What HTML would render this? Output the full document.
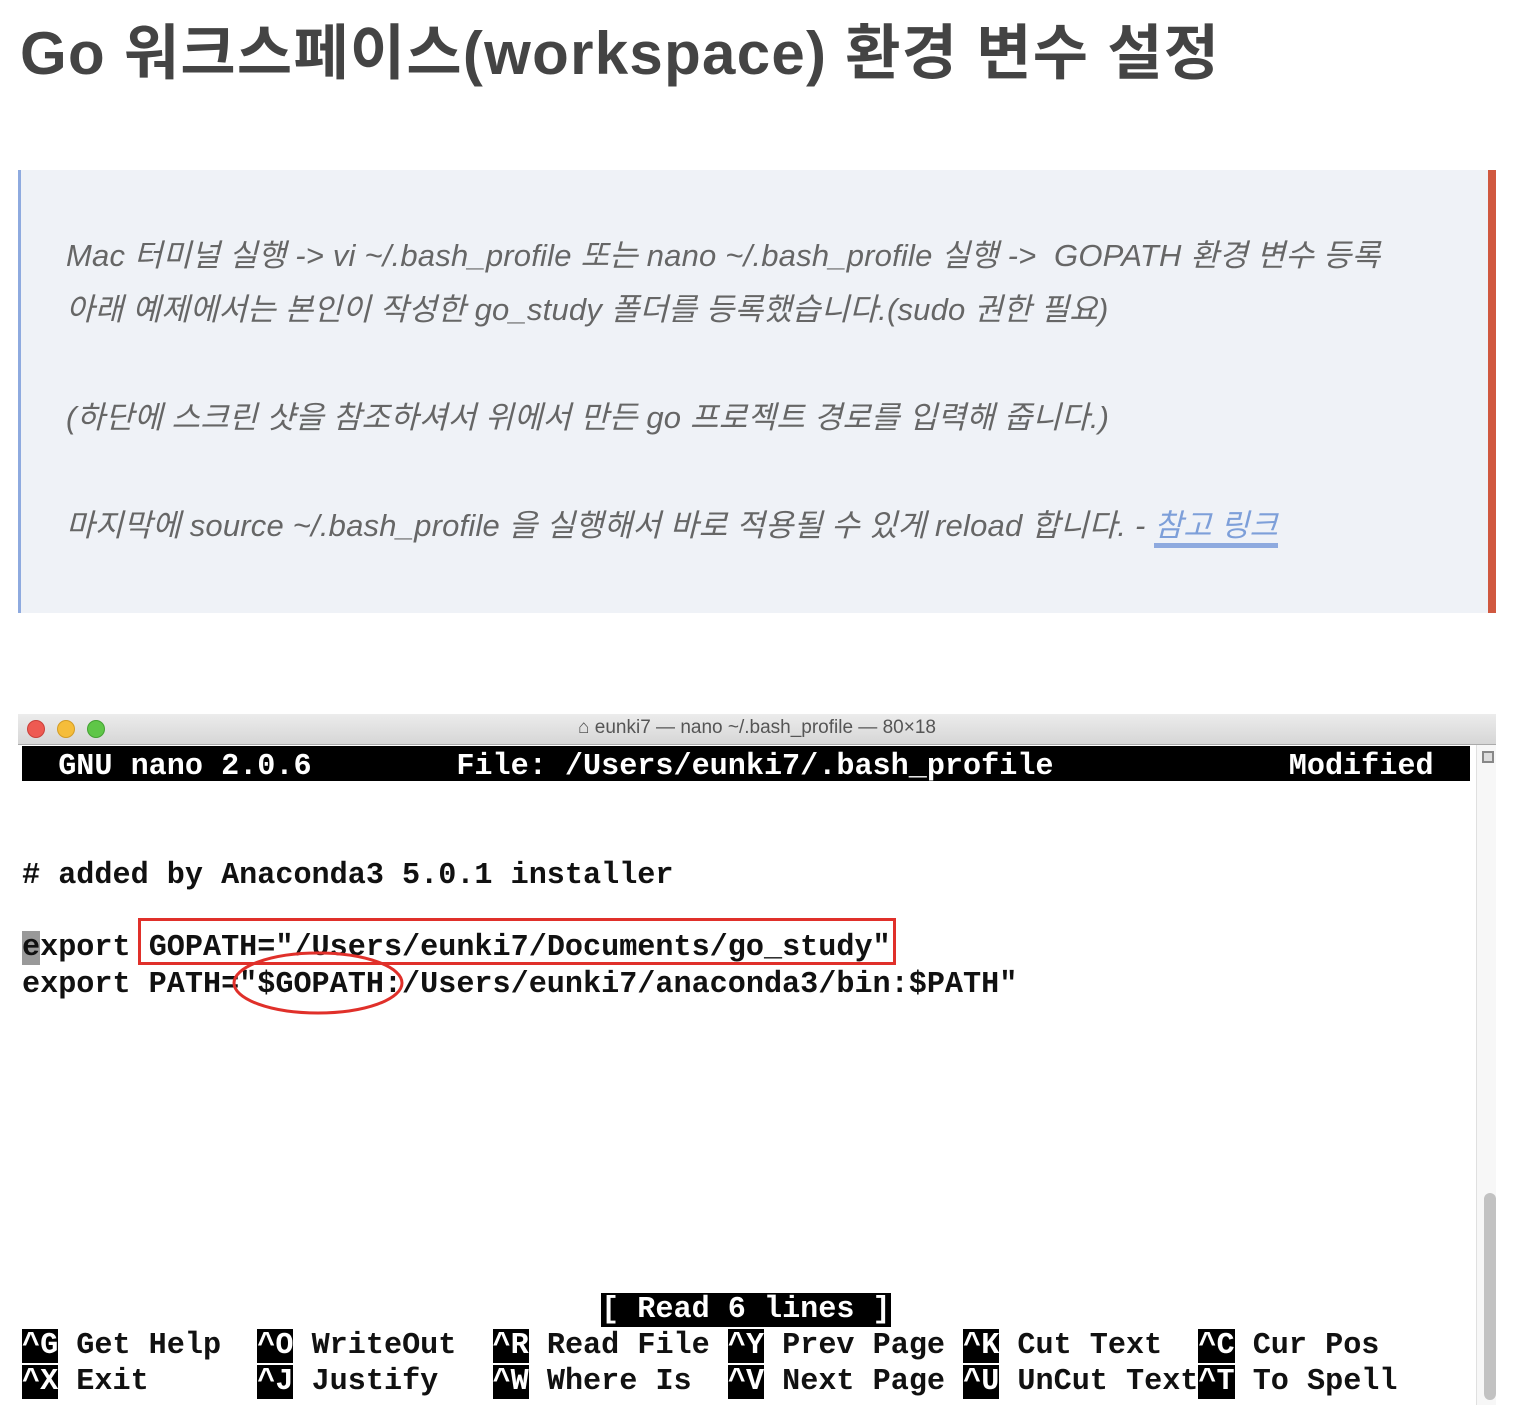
<!DOCTYPE html>
<html><head><meta charset="utf-8"><style>
*{margin:0;padding:0;box-sizing:border-box}
body{width:1522px;height:1422px;background:#fff;position:relative;overflow:hidden;font-family:"Liberation Sans","Noto Sans CJK KR",sans-serif}
h1{position:absolute;left:20px;top:12px;font-size:60px;font-weight:bold;color:#444;letter-spacing:1.3px;white-space:nowrap;line-height:84px}
.bq{position:absolute;left:18px;top:170px;width:1478px;height:443px;background:#eff2f7;border-left:3px solid #8eaadf;border-right:8px solid #d0583f}
.bq p{position:absolute;left:45px;font-size:31px;font-style:italic;color:#666;white-space:nowrap;letter-spacing:0.2px;line-height:40px}
.bq a{color:#7d9fd9;text-decoration:none;border-bottom:5px solid #8eaadf}
.tb{position:absolute;left:18px;top:714px;width:1478px;height:31px;background:linear-gradient(#ececec,#d6d6d6);border-bottom:1px solid #aaa}
.dot{position:absolute;top:6px;width:18px;height:18px;border-radius:50%}
.tt{position:absolute;left:0;right:0;top:3px;text-align:center;font-size:19px;color:#555}
.term{position:absolute;left:22px;font-family:"Liberation Mono",monospace;font-weight:bold;font-size:30.17px;line-height:36px;white-space:pre;color:#111}
.k{background:#000;color:#fff}
.sb{position:absolute;left:1476px;top:745px;width:20px;height:660px;background:#f7f7f7;border-left:1px solid #e0e0e0}
</style></head><body>
<h1>Go 워크스페이스(workspace) 환경 변수 설정</h1>
<div class="bq">
<p style="top:66px">Mac 터미널 실행 -&gt; vi ~/.bash_profile 또는 nano ~/.bash_profile 실행 -&gt;&nbsp; GOPATH 환경 변수 등록</p>
<p style="top:120px">아래 예제에서는 본인이 작성한 go_study 폴더를 등록했습니다.(sudo 권한 필요)</p>
<p style="top:228px">(하단에 스크린 샷을 참조하셔서 위에서 만든 go 프로젝트 경로를 입력해 줍니다.)</p>
<p style="top:336px">마지막에 source ~/.bash_profile 을 실행해서 바로 적용될 수 있게 reload 합니다. - <a>참고 링크</a></p>
</div>
<div class="tb">
<div class="dot" style="left:9px;background:#ee5a52;border:1px solid #c9403a"></div>
<div class="dot" style="left:39px;background:#f5bd3a;border:1px solid #d39c25"></div>
<div class="dot" style="left:69px;background:#5fc648;border:1px solid #43a132"></div>
<div class="tt">⌂ eunki7 — nano ~/.bash_profile — 80×18</div>
</div>
<div class="sb"><div style="position:absolute;left:7px;top:448px;width:12px;height:207px;border-radius:6px;background:#c2c2c2"></div><div style="position:absolute;left:5px;top:6px;width:12px;height:12px;border:2px solid #888;background:#ddd"></div></div>
<div style="position:absolute;left:22px;top:746px;width:1448px;height:35px;background:#000"></div>
<div class="term" style="top:749px;color:#fff">  GNU nano 2.0.6        File: /Users/eunki7/.bash_profile             Modified</div>
<div class="term" style="top:858px"># added by Anaconda3 5.0.1 installer</div>
<div class="term" style="top:930px"><span style="background:#999">e</span>xport GOPATH="/Users/eunki7/Documents/go_study"</div>
<div class="term" style="top:967px">export PATH="$GOPATH:/Users/eunki7/anaconda3/bin:$PATH"</div>
<div style="position:absolute;left:138px;top:918px;width:758px;height:47px;border:3px solid #e0302a"></div>
<svg style="position:absolute;left:230px;top:950px" width="180" height="70"><ellipse cx="88" cy="33" rx="84" ry="30" fill="none" stroke="#e0302a" stroke-width="3"/></svg>
<div class="term" style="top:1292px">                                <span class="k">[ Read 6 lines ]</span></div>
<div class="term" style="top:1328px"><span class="k">^G</span> Get Help  <span class="k">^O</span> WriteOut  <span class="k">^R</span> Read File <span class="k">^Y</span> Prev Page <span class="k">^K</span> Cut Text  <span class="k">^C</span> Cur Pos</div>
<div class="term" style="top:1364px"><span class="k">^X</span> Exit      <span class="k">^J</span> Justify   <span class="k">^W</span> Where Is  <span class="k">^V</span> Next Page <span class="k">^U</span> UnCut Text<span class="k">^T</span> To Spell</div>
</body></html>
